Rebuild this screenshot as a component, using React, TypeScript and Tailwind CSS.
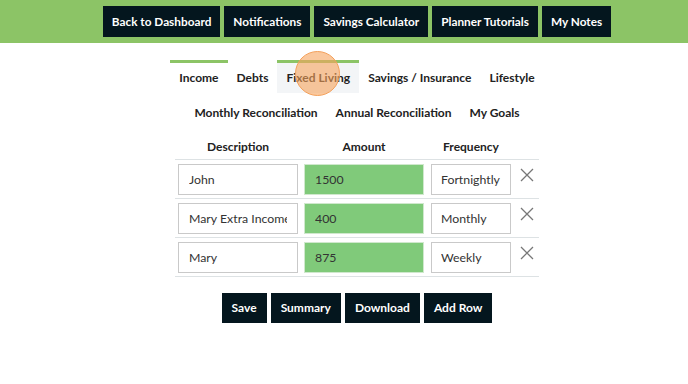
import { useState } from 'react'

const topLinks = ['Back to Dashboard', 'Notifications', 'Savings Calculator', 'Planner Tutorials', 'My Notes']
const tabsOne = ['Income', 'Debts', 'Fixed Living', 'Savings / Insurance', 'Lifestyle']
const tabsTwo = ['Monthly Reconciliation', 'Annual Reconciliation', 'My Goals']

const initialRows = [
  { description: 'John', amount: '1500', frequency: 'Fortnightly' },
  { description: 'Mary Extra Income', amount: '400', frequency: 'Monthly' },
  { description: 'Mary', amount: '875', frequency: 'Weekly' },
]

function CloseIcon() {
  return (
    <svg width="14" height="14" viewBox="0 0 14 14" className="block text-[#777]">
      <path d="M1 1L13 13M13 1L1 13" stroke="currentColor" strokeWidth="1.3" />
    </svg>
  )
}

export default function App() {
  const [rows, setRows] = useState(initialRows)

  const update = (i: number, key: 'description' | 'amount' | 'frequency', value: string) => {
    setRows(rows.map((r, idx) => (idx === i ? { ...r, [key]: value } : r)))
  }

  return (
    <div className="min-h-screen bg-white font-['Lato','Open_Sans',sans-serif] text-[#222]">
      {/* top nav */}
      <div className="h-[43px] bg-[#8cc466] pl-[26px] flex justify-center pt-[6px] gap-1">
        {topLinks.map((l) => (
          <button key={l} className="h-[31px] px-[9px] bg-[#04161e] text-white text-[11.8px] font-bold">
            {l}
          </button>
        ))}
      </div>

      <div className="pl-[26px] flex flex-col items-center">
        {/* tabs */}
        <div className="flex mt-[17px]">
          {tabsOne.map((t) => {
            const indicator = t === 'Income' || t === 'Fixed Living'
            const active = t === 'Fixed Living'
            return (
              <div
                key={t}
                className={`relative h-[33px] px-[9px] flex items-center text-[12px] font-bold border-t-[3px] ${
                  indicator ? 'border-[#8cc466]' : 'border-transparent'
                } ${active ? 'bg-[#f3f5f7]' : ''}`}
              >
                {t}
                {active && (
                  <span className="absolute left-[18px] top-[-12px] w-[45px] h-[45px] rounded-full bg-[#f6a45c]/60 border border-[#f4a05a]" />
                )}
              </div>
            )
          })}
        </div>
        <div className="flex mt-[3px]">
          {tabsTwo.map((t) => (
            <div key={t} className="h-[33px] px-[9px] flex items-center text-[12px] font-bold">
              {t}
            </div>
          ))}
        </div>

        {/* table */}
        <div className="w-[364px] mt-[6px]">
          <div className="grid grid-cols-[126px_126px_88px_24px] h-[24px] items-center text-[12px] font-bold text-center">
            <div>Description</div>
            <div>Amount</div>
            <div>Frequency</div>
            <div />
          </div>
          {rows.map((r, i) => (
            <div
              key={i}
              className="grid grid-cols-[126px_126px_88px_24px] border-t border-[#dde2e4] py-[3.5px] text-[12.3px] text-[#333]"
            >
              <div className="px-[3px]">
                <input
                  value={r.description}
                  onChange={(e) => update(i, 'description', e.target.value)}
                  className="w-full h-[31px] px-[10px] border border-[#c9c9c9] bg-white outline-none"
                />
              </div>
              <div className="px-[3px]">
                <input
                  value={r.amount}
                  onChange={(e) => update(i, 'amount', e.target.value)}
                  className="w-full h-[31px] px-[10px] border border-[#d0e8cd] bg-[#80ca7a] outline-none"
                />
              </div>
              <div className="px-[4px]">
                <input
                  value={r.frequency}
                  onChange={(e) => update(i, 'frequency', e.target.value)}
                  className="w-full h-[31px] px-[9px] border border-[#c9c9c9] bg-white outline-none"
                />
              </div>
              <div className="flex justify-center pt-[4px]">
                <button className="h-[14px]" onClick={() => setRows(rows.filter((_, idx) => idx !== i))}>
                  <CloseIcon />
                </button>
              </div>
            </div>
          ))}
          <div className="border-t border-[#dde2e4]" />
        </div>

        {/* actions */}
        <div className="flex gap-1 mt-[16px]">
          {['Save', 'Summary', 'Download', 'Add Row'].map((b) => (
            <button
              key={b}
              onClick={() =>
                b === 'Add Row' && setRows([...rows, { description: '', amount: '', frequency: '' }])
              }
              className="h-[30px] px-[10px] bg-[#04161e] text-white text-[12px] font-bold"
            >
              {b}
            </button>
          ))}
        </div>
      </div>
    </div>
  )
}
